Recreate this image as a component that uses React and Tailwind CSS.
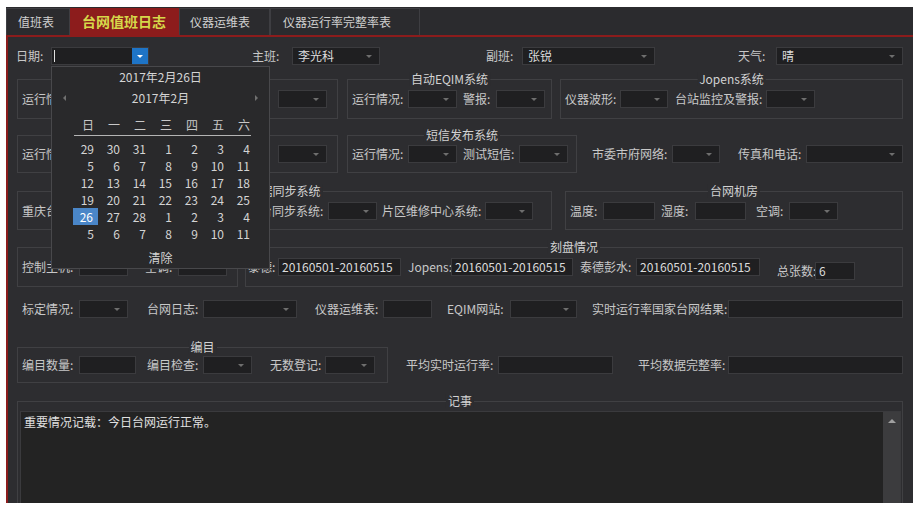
import React from "react";

const FONT = "font-['Noto_Sans_CJK_SC','Microsoft_YaHei',sans-serif]";

function L({ children, className = "" }) {
  return (
    <span className={`shrink-0 whitespace-nowrap text-[12px] leading-[18px] text-[#c8c8c8] ${className}`}>
      {children}
    </span>
  );
}

function S({ className = "", value }) {
  return (
    <div className={`relative h-[18px] shrink-0 border border-[#3b3b3e] bg-[#1f1f21] pl-[5px] text-[12px] leading-[16px] text-[#dcdcdc] ${className}`}>
      {value}
      <span className="absolute right-[7px] top-[7px] h-0 w-0 border-x-[3px] border-t-[3px] border-x-transparent border-t-[#6e6e6e]" />
    </div>
  );
}

function I({ className = "", value }) {
  return (
    <div className={`h-[18px] shrink-0 border border-[#3b3b3e] bg-[#1f1f21] pl-[3px] text-[12px] leading-[16px] text-[#dcdcdc] ${className}`}>
      {value}
    </div>
  );
}

function G({ title, className = "", children }) {
  return (
    <div className={`relative flex shrink-0 items-center border border-[#404043] ${className}`}>
      {title && (
        <span className="absolute left-1/2 top-[-8px] -translate-x-1/2 whitespace-nowrap bg-[#2d2d30] px-[2px] text-[12px] leading-[14px] text-[#d2d2d2]">
          {title}
        </span>
      )}
      {children}
    </div>
  );
}

const weeks = [
  ["29", "30", "31", "1", "2", "3", "4"],
  ["5", "6", "7", "8", "9", "10", "11"],
  ["12", "13", "14", "15", "16", "17", "18"],
  ["19", "20", "21", "22", "23", "24", "25"],
  ["26", "27", "28", "1", "2", "3", "4"],
  ["5", "6", "7", "8", "9", "10", "11"],
];

function Calendar() {
  return (
    <div className="absolute left-[45px] top-[59px] z-10 h-[203px] w-[219px] border border-[#48484b] bg-[#29292b] pt-[2px] text-[12px] text-[#d4d4d4]">
      <div className="h-[16px] text-center leading-[16px]">2017年2月26日</div>
      <div className="mt-[5px] flex h-[16px] items-center justify-between px-[11px] leading-[16px]">
        <span className="h-0 w-0 border-y-[3px] border-r-[3px] border-y-transparent border-r-[#707070]" />
        <span>2017年2月</span>
        <span className="h-0 w-0 border-y-[3px] border-l-[3px] border-y-transparent border-l-[#707070]" />
      </div>
      <div className="ml-[21px] mt-[11px] grid h-[16px] w-[182px] grid-cols-7 leading-[16px] text-[#c8c8c8]">
        {["日", "一", "二", "三", "四", "五", "六"].map((d) => (
          <span key={d} className="pr-[5px] text-right">{d}</span>
        ))}
      </div>
      <div className="ml-[22px] mt-[2px] h-px w-[177px] bg-[#b4b4b4]" />
      <div className="ml-[21px] mt-[4px] w-[182px]">
        {weeks.map((w, i) => (
          <div key={i} className="grid h-[17px] grid-cols-7 leading-[17px]">
            {w.map((d, j) => (
              <span
                key={j}
                className={
                  i === 4 && j === 0
                    ? "mr-px bg-[#4a86c8] pr-[5px] text-right text-white"
                    : "pr-[5px] text-right"
                }
              >
                {d}
              </span>
            ))}
          </div>
        ))}
      </div>
      <div className="mt-[8px] h-[16px] text-center leading-[16px]">清除</div>
    </div>
  );
}

function Tab({ children, className = "" }) {
  return (
    <div className={`flex h-[27px] shrink-0 items-center border border-b-0 border-[#3e3e42] text-[12px] text-[#d0d0d0] ${className}`}>
      {children}
    </div>
  );
}

export default function App() {
  return (
    <div className={`min-h-screen bg-white pl-[6px] pt-[7px] ${FONT}`}>
      <div className="relative flex h-[496px] w-[907px] flex-col overflow-hidden bg-[#2b2b2e]">
        {/* tabs */}
        <div className="flex h-[28px] shrink-0 items-end">
          <Tab className="w-[64px] pl-[11px]">值班表</Tab>
          <div className="flex h-[27px] w-[109px] shrink-0 items-center bg-[#8c1c1c] pl-[12px] text-[14px] font-bold text-[#d6d84a]">
            台网值班日志
          </div>
          <Tab className="w-[91px] pl-[10px]">仪器运维表</Tab>
          <Tab className="w-[150px] pl-[12px]">仪器运行率完整率表</Tab>
        </div>

        {/* content */}
        <div className="flex h-[468px] shrink-0 flex-col overflow-hidden border-l-2 border-t-2 border-[#8c1c1c] bg-[#2d2d30]">
          {/* row 1 */}
          <div className="mt-[10px] flex h-[18px] shrink-0 items-center">
            <L className="ml-[8px] w-[35px]">日期:</L>
            <div className="flex h-[18px] w-[98px] shrink-0 border border-[#3b3b3e] bg-[#1f1f21]">
              <span className="ml-[2px] mt-[2px] h-[12px] w-px bg-[#e0e0e0]" />
              <span className="ml-auto flex h-full w-[16px] items-center justify-center bg-[#1e74c6]">
                <span className="h-0 w-0 border-x-[3px] border-t-[3px] border-x-transparent border-t-white" />
              </span>
            </div>
            <L className="ml-[103px] w-[40px]">主班:</L>
            <S className="w-[88px]" value="李光科" />
            <L className="ml-[106px] w-[36px]">副班:</L>
            <S className="w-[133px]" value="张锐" />
            <L className="ml-[83px] w-[38px]">天气:</L>
            <S className="w-[127px]" value="晴" />
          </div>

          {/* row 2 */}
          <div className="mt-[14px] flex h-[40px] shrink-0">
            <G title="测震台网" className="ml-[9px] w-[321px]">
              <L className="ml-[4px] w-[57px]">运行情况:</L>
              <S className="w-[49px]" />
              <L className="ml-[17px] w-[33px]">台站:</L>
              <S className="w-[49px]" />
              <L className="ml-[13px] w-[38px]">警报:</L>
              <S className="w-[49px]" />
            </G>
            <G title="自动EQIM系统" className="ml-[9px] w-[205px]">
              <L className="ml-[4px] w-[56px]">运行情况:</L>
              <S className="w-[49px]" />
              <L className="ml-[6px] w-[33px]">警报:</L>
              <S className="w-[49px]" />
            </G>
            <G title="Jopens系统" className="ml-[8px] w-[343px]">
              <L className="ml-[4px] w-[55px]">仪器波形:</L>
              <S className="w-[48px]" />
              <L className="ml-[7px] w-[91px]">台站监控及警报:</L>
              <S className="w-[49px]" />
            </G>
          </div>

          {/* row 3 */}
          <div className="mt-[16px] flex h-[38px] shrink-0 items-center">
            <G title="强震台网" className="ml-[9px] h-full w-[321px]">
              <L className="ml-[4px] w-[57px]">运行情况:</L>
              <S className="w-[49px]" />
              <L className="ml-[17px] w-[33px]">台站:</L>
              <S className="w-[49px]" />
              <L className="ml-[13px] w-[38px]">警报:</L>
              <S className="w-[49px]" />
            </G>
            <G title="短信发布系统" className="ml-[9px] h-full w-[230px]">
              <L className="ml-[4px] w-[56px]">运行情况:</L>
              <S className="w-[49px]" />
              <L className="ml-[6px] w-[56px]">测试短信:</L>
              <S className="w-[49px]" />
            </G>
            <L className="ml-[15px] w-[80px]">市委市府网络:</L>
            <S className="w-[48px]" />
            <L className="ml-[18px] w-[68px]">传真和电话:</L>
            <S className="w-[97px]" />
          </div>

          {/* row 4 */}
          <div className="mt-[18px] flex h-[39px] shrink-0">
            <G title="数据同步系统" className="ml-[9px] w-[535px]">
              <L className="ml-[4px] w-[79px]">重庆台网中心:</L>
              <S className="w-[49px]" />
              <L className="ml-[86px] w-[92px]">区县台同步系统:</L>
              <S className="w-[49px]" />
              <L className="ml-[5px] w-[103px]">片区维修中心系统:</L>
              <S className="w-[48px]" />
            </G>
            <G title="台网机房" className="ml-[13px] w-[338px]">
              <L className="ml-[4px] w-[33px]">温度:</L>
              <I className="w-[52px]" />
              <L className="ml-[6px] w-[34px]">湿度:</L>
              <I className="w-[51px]" />
              <L className="ml-[10px] w-[33px]">空调:</L>
              <S className="w-[49px]" />
            </G>
          </div>

          {/* row 5 */}
          <div className="mt-[17px] flex h-[40px] shrink-0">
            <G title="机房环境" className="ml-[9px] w-[221px]">
              <L className="ml-[4px] w-[57px]">控制主机:</L>
              <I className="w-[49px]" />
              <L className="ml-[17px] w-[33px]">空调:</L>
              <I className="w-[49px]" />
            </G>
            <G title="刻盘情况" className="ml-[7px] w-[658px]">
              <L className="ml-[2px] w-[30px]">泰德:</L>
              <I className="w-[123px]" value="20160501-20160515" />
              <L className="ml-[7px] w-[43px]">Jopens:</L>
              <I className="w-[122px]" value="20160501-20160515" />
              <L className="ml-[7px] w-[56px]">泰德彭水:</L>
              <I className="w-[124px]" value="20160501-20160515" />
              <div className="ml-[17px] mt-[8px] flex items-center">
                <L className="w-[38px]">总张数:</L>
                <I className="w-[40px]" value="6" />
              </div>
            </G>
          </div>

          {/* row 6 */}
          <div className="mt-[13px] flex h-[18px] shrink-0 items-center">
            <L className="ml-[14px] w-[57px]">标定情况:</L>
            <S className="w-[49px]" />
            <L className="ml-[19px] w-[56px]">台网日志:</L>
            <S className="w-[94px]" />
            <L className="ml-[18px] w-[68px]">仪器运维表:</L>
            <I className="w-[49px]" />
            <L className="ml-[15px] w-[63px]">EQIM网站:</L>
            <S className="w-[67px]" />
            <L className="ml-[15px] w-[136px]">实时运行率国家台网结果:</L>
            <I className="w-[175px]" />
          </div>

          {/* row 7 */}
          <div className="mt-[29px] flex h-[36px] shrink-0 items-center">
            <G title="编目" className="ml-[9px] h-full w-[371px]">
              <L className="ml-[4px] w-[57px]">编目数量:</L>
              <I className="w-[57px]" />
              <L className="ml-[11px] w-[56px]">编目检查:</L>
              <S className="w-[49px]" />
              <L className="ml-[18px] w-[55px]">无数登记:</L>
              <S className="w-[50px]" />
            </G>
            <L className="ml-[18px] w-[92px]">平均实时运行率:</L>
            <I className="w-[115px]" />
            <L className="ml-[25px] w-[90px]">平均数据完整率:</L>
            <I className="w-[175px]" />
          </div>

          {/* row 8 */}
          <div className="relative ml-[9px] mt-[18px] h-[140px] w-[886px] shrink-0 border border-[#404043]">
            <span className="absolute left-1/2 top-[-8px] -translate-x-1/2 bg-[#2d2d30] px-[2px] text-[12px] leading-[14px] text-[#d2d2d2]">
              记事
            </span>
            <div className="relative ml-[2px] mt-[9px] h-[120px] w-[881px] border border-[#3a3a3d] bg-[#232323] pl-[3px] pt-[2px] text-[12px] leading-[16px] text-[#e0e0e0]">
              重要情况记载：今日台网运行正常。
              <div className="absolute bottom-0 right-0 top-0 flex w-[17px] justify-center bg-[#3c3c3e] pt-[7px]">
                <span className="h-0 w-0 border-x-[4px] border-b-[4px] border-x-transparent border-b-[#a0a0a0]" />
              </div>
            </div>
          </div>
        </div>

        <Calendar />
      </div>
    </div>
  );
}
